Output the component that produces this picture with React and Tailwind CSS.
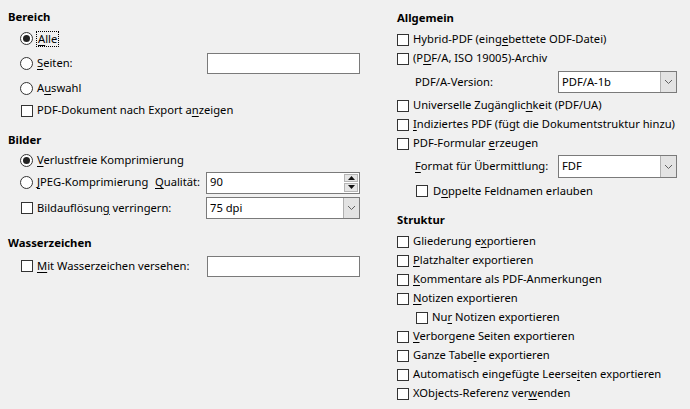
import { useState } from 'react';

const font = { fontFamily: '"Noto Sans", "Open Sans", sans-serif' };

// label text with one underlined mnemonic letter
function Mn({ text, at }) {
  if (at == null || at < 0) return <span className="whitespace-nowrap">{text}</span>;
  return (
    <span className="whitespace-nowrap">
      {text.slice(0, at)}
      <span className="underline underline-offset-2">{text[at]}</span>
      {text.slice(at + 1)}
    </span>
  );
}

function Box({ checked }) {
  return (
    <span className="flex h-[12px] w-[12px] shrink-0 items-center justify-center border border-[#333333] bg-white">
      {checked && (
        <svg width="9" height="9" viewBox="0 0 9 9">
          <path d="M1 4.5 L3.5 7 L8 1.5" fill="none" stroke="#222" strokeWidth="1.4" />
        </svg>
      )}
    </span>
  );
}

function Radio({ checked }) {
  return (
    <span className="flex h-[13px] w-[13px] shrink-0 items-center justify-center rounded-full border border-[#333333] bg-white">
      {checked && <span className="h-[7px] w-[7px] rounded-full bg-[#222222]" />}
    </span>
  );
}

function Heading({ children, className = '' }) {
  return <div className={`flex h-[18px] items-center whitespace-nowrap text-[11.3px] font-bold ${className}`}>{children}</div>;
}

function Check({ label, at, h = 'h-[19px]', indent = '', gap = 'gap-[4px]' }) {
  return (
    <div className={`flex ${h} items-center ${gap} ${indent}`}>
      <Box />
      <Mn text={label} at={at} />
    </div>
  );
}

function Chevron() {
  return (
    <svg width="9" height="6" viewBox="0 0 9 6">
      <path d="M1 1 L4.5 4.5 L8 1" fill="none" stroke="#606060" strokeWidth="1" />
    </svg>
  );
}

function Combo({ value, w = 'w-[154px]', h = 'h-[22px]' }) {
  return (
    <div className={`flex ${w} ${h} shrink-0 items-stretch border border-[#7a7a7a] bg-white`}>
      <div className="flex flex-1 items-center pl-[3px]">{value}</div>
      <div className="flex w-[16px] items-center justify-center border-l border-[#b0b0b0] bg-[#e3e3e3]">
        <Chevron />
      </div>
    </div>
  );
}

function Spin({ value }) {
  return (
    <div className="flex h-[22px] w-[154px] shrink-0 items-stretch border border-[#7a7a7a] bg-white">
      <div className="flex flex-1 items-center pl-[3px]">{value}</div>
      <div className="flex w-[15px] flex-col gap-[1px] py-[1px] pr-[1px]">
        <div className="flex flex-1 items-center justify-center border border-[#b5b5b5] bg-[#e5e5e5]">
          <svg width="7" height="4" viewBox="0 0 7 4"><path d="M0 4 L3.5 0 L7 4 Z" fill="#111" /></svg>
        </div>
        <div className="flex flex-1 items-center justify-center border border-[#b5b5b5] bg-[#e5e5e5]">
          <svg width="7" height="4" viewBox="0 0 7 4"><path d="M0 0 L3.5 4 L7 0 Z" fill="#111" /></svg>
        </div>
      </div>
    </div>
  );
}

function Field({ h = 'h-[21px]' }) {
  return <div className={`${h} w-[153px] shrink-0 border border-[#7a7a7a] bg-white`} />;
}

export default function App() {
  const [range] = useState('all');

  return (
    <div className="flex h-[409px] w-[690px] overflow-hidden bg-[#f0f0f0] text-[11.2px] text-black" style={font}>
      {/* left column */}
      <div className="flex w-[389px] shrink-0 flex-col pl-[8px] pt-[8px]">
        <Heading>Bereich</Heading>
        <div className="flex flex-col pl-[12px]">
          <div className="flex h-[25px] items-center gap-[3px]">
            <Radio checked={range === 'all'} />
            <span className="border border-dotted border-black px-[1px] leading-[14px]"><Mn text="Alle" at={0} /></span>
          </div>
          <div className="flex h-[25px] items-center">
            <div className="flex w-[187px] items-center gap-[4px]">
              <Radio />
              <Mn text="Seiten:" at={0} />
            </div>
            <Field />
          </div>
          <div className="flex h-[24px] items-center gap-[4px]">
            <Radio />
            <Mn text="Auswahl" at={1} />
          </div>
          <div className="flex h-[21px] items-center gap-[4px] pl-[1px]">
            <Box />
            <Mn text="PDF-Dokument nach Export anzeigen" at={26} />
          </div>
        </div>

        <Heading className="mt-[10px]">Bilder</Heading>
        <div className="flex flex-col pl-[12px]">
          <div className="mt-[1px] flex h-[21px] items-center gap-[4px]">
            <Radio checked />
            <Mn text="Verlustfreie Komprimierung" at={0} />
          </div>
          <div className="flex h-[23px] items-center">
            <div className="flex w-[135px] items-center gap-[4px]">
              <Radio />
              <Mn text="JPEG-Komprimierung" at={0} />
            </div>
            <div className="w-[51px]"><Mn text="Qualität:" at={0} /></div>
            <Spin value="90" />
          </div>
          <div className="mt-[2px] flex h-[24px] items-center">
            <div className="flex w-[186px] items-center gap-[4px] pl-[1px]">
              <Box />
              <Mn text="Bildauflösung verringern:" at={12} />
            </div>
            <Combo value="75 dpi" />
          </div>
        </div>

        <Heading className="mt-[14px]">Wasserzeichen</Heading>
        <div className="mt-[4px] flex h-[21px] items-center pl-[13px]">
          <div className="flex w-[186px] items-center gap-[4px]">
            <Box />
            <Mn text="Mit Wasserzeichen versehen:" at={0} />
          </div>
          <Field h="h-[21px]" />
        </div>
      </div>

      {/* right column */}
      <div className="flex flex-1 flex-col pl-[8px] pt-[9px]">
        <Heading>Allgemein</Heading>
        <div className="mt-[3px] flex flex-col">
          <Check label="Hybrid-PDF (eingebettete ODF-Datei)" at={16} />
          <Check label="(PDF/A, ISO 19005)-Archiv" at={2} />
          <div className="mt-[2px] flex h-[24px] items-center pl-[18px]">
            <div className="w-[143px]">PDF/A-Version:</div>
            <Combo value="PDF/A-1b" w="w-[119px]" />
          </div>
          <div className="mt-[2px]">
            <Check label="Universelle Zugänglichkeit (PDF/UA)" at={21} />
          </div>
          <Check label="Indiziertes PDF (fügt die Dokumentstruktur hinzu)" at={0} />
          <Check label="PDF-Formular erzeugen" at={13} />
          <div className="mt-[2px] flex h-[23px] items-center pl-[18px]">
            <div className="w-[143px]"><Mn text="Format für Übermittlung:" at={0} /></div>
            <Combo value="FDF" w="w-[119px]" h="h-[23px]" />
          </div>
          <div className="mt-[3px]">
            <Check label="Doppelte Feldnamen erlauben" at={1} h="h-[20px]" indent="pl-[19px]" gap="gap-[5px]" />
          </div>
        </div>

        <Heading className="mt-[10px]">Struktur</Heading>
        <div className="mt-[3px] flex flex-col">
          <Check label="Gliederung exportieren" at={12} />
          <Check label="Platzhalter exportieren" at={0} />
          <Check label="Kommentare als PDF-Anmerkungen" at={0} />
          <Check label="Notizen exportieren" at={0} />
          <Check label="Nur Notizen exportieren" at={2} indent="pl-[19px]" gap="gap-[4px]" />
          <Check label="Verborgene Seiten exportieren" at={0} />
          <Check label="Ganze Tabelle exportieren" at={10} />
          <Check label="Automatisch eingefügte Leerseiten exportieren" at={29} />
          <Check label="XObjects-Referenz verwenden" at={21} />
        </div>
      </div>
    </div>
  );
}
